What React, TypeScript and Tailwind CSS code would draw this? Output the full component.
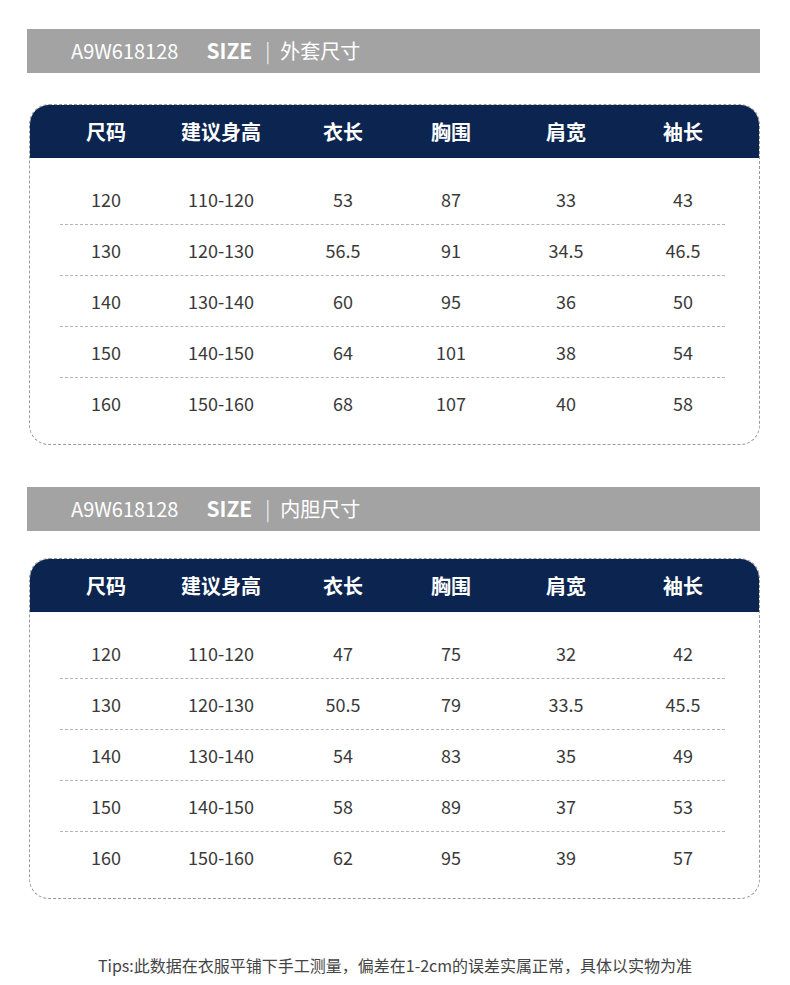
const FONT = '"Noto Sans CJK SC", "Noto Sans", sans-serif'

const HEAD = ['尺码', '建议身高', '衣长', '胸围', '肩宽', '袖长']

const OUTER = [
  ['120', '110-120', '53', '87', '33', '43'],
  ['130', '120-130', '56.5', '91', '34.5', '46.5'],
  ['140', '130-140', '60', '95', '36', '50'],
  ['150', '140-150', '64', '101', '38', '54'],
  ['160', '150-160', '68', '107', '40', '58'],
]

const INNER = [
  ['120', '110-120', '47', '75', '32', '42'],
  ['130', '120-130', '50.5', '79', '33.5', '45.5'],
  ['140', '130-140', '54', '83', '35', '49'],
  ['150', '140-150', '58', '89', '37', '53'],
  ['160', '150-160', '62', '95', '39', '57'],
]

const COLS = 'grid grid-cols-[116px_114px_130px_86px_144px_90px] pl-[18px]'

function TitleBar({ label }: { label: string }) {
  return (
    <div className="mx-[27px] flex h-[44px] w-[733px] items-center bg-[#a3a3a3] pl-[44px] text-white">
      <span className="text-[20px]">A9W618128</span>
      <span className="ml-[28px] text-[21px] font-bold">SIZE</span>
      <span className="ml-[13px] text-[20px] font-light">|</span>
      <span className="ml-[10px] text-[20px]">{label}</span>
    </div>
  )
}

function SizeCard({ rows }: { rows: string[][] }) {
  return (
    <div className="ml-[29px] h-[341px] w-[731px] overflow-hidden rounded-[20px] border border-dashed border-[#9a9a9a]">
      <div className={`${COLS} h-[53px] items-center bg-[#0c2550] text-[20px] font-bold text-white`}>
        {HEAD.map((h) => (
          <div key={h} className="text-center">{h}</div>
        ))}
      </div>
      <div className="pt-[16px]">
        {rows.map((r, i) => (
          <div key={i} className="ml-[30px] mr-[34px] border-b border-dashed border-[#b5b5b5] last:border-b-0">
            <div className={`${COLS} -ml-[30px] h-[50px] items-center text-[18px] text-[#3a3a3a]`}>
              {r.map((c, j) => (
                <div key={j} className="text-center">{c}</div>
              ))}
            </div>
          </div>
        ))}
      </div>
    </div>
  )
}

export default function App() {
  return (
    <div className="h-[985px] w-[790px] bg-white" style={{ fontFamily: FONT }}>
      <div className="pt-[29px]">
        <TitleBar label="外套尺寸" />
      </div>
      <div className="pt-[31px]">
        <SizeCard rows={OUTER} />
      </div>
      <div className="pt-[42px]">
        <TitleBar label="内胆尺寸" />
      </div>
      <div className="pt-[27px]">
        <SizeCard rows={INNER} />
      </div>
      <p className="mt-[54px] text-center text-[16px] text-[#444]">
        Tips:此数据在衣服平铺下手工测量，偏差在1-2cm的误差实属正常，具体以实物为准
      </p>
    </div>
  )
}
